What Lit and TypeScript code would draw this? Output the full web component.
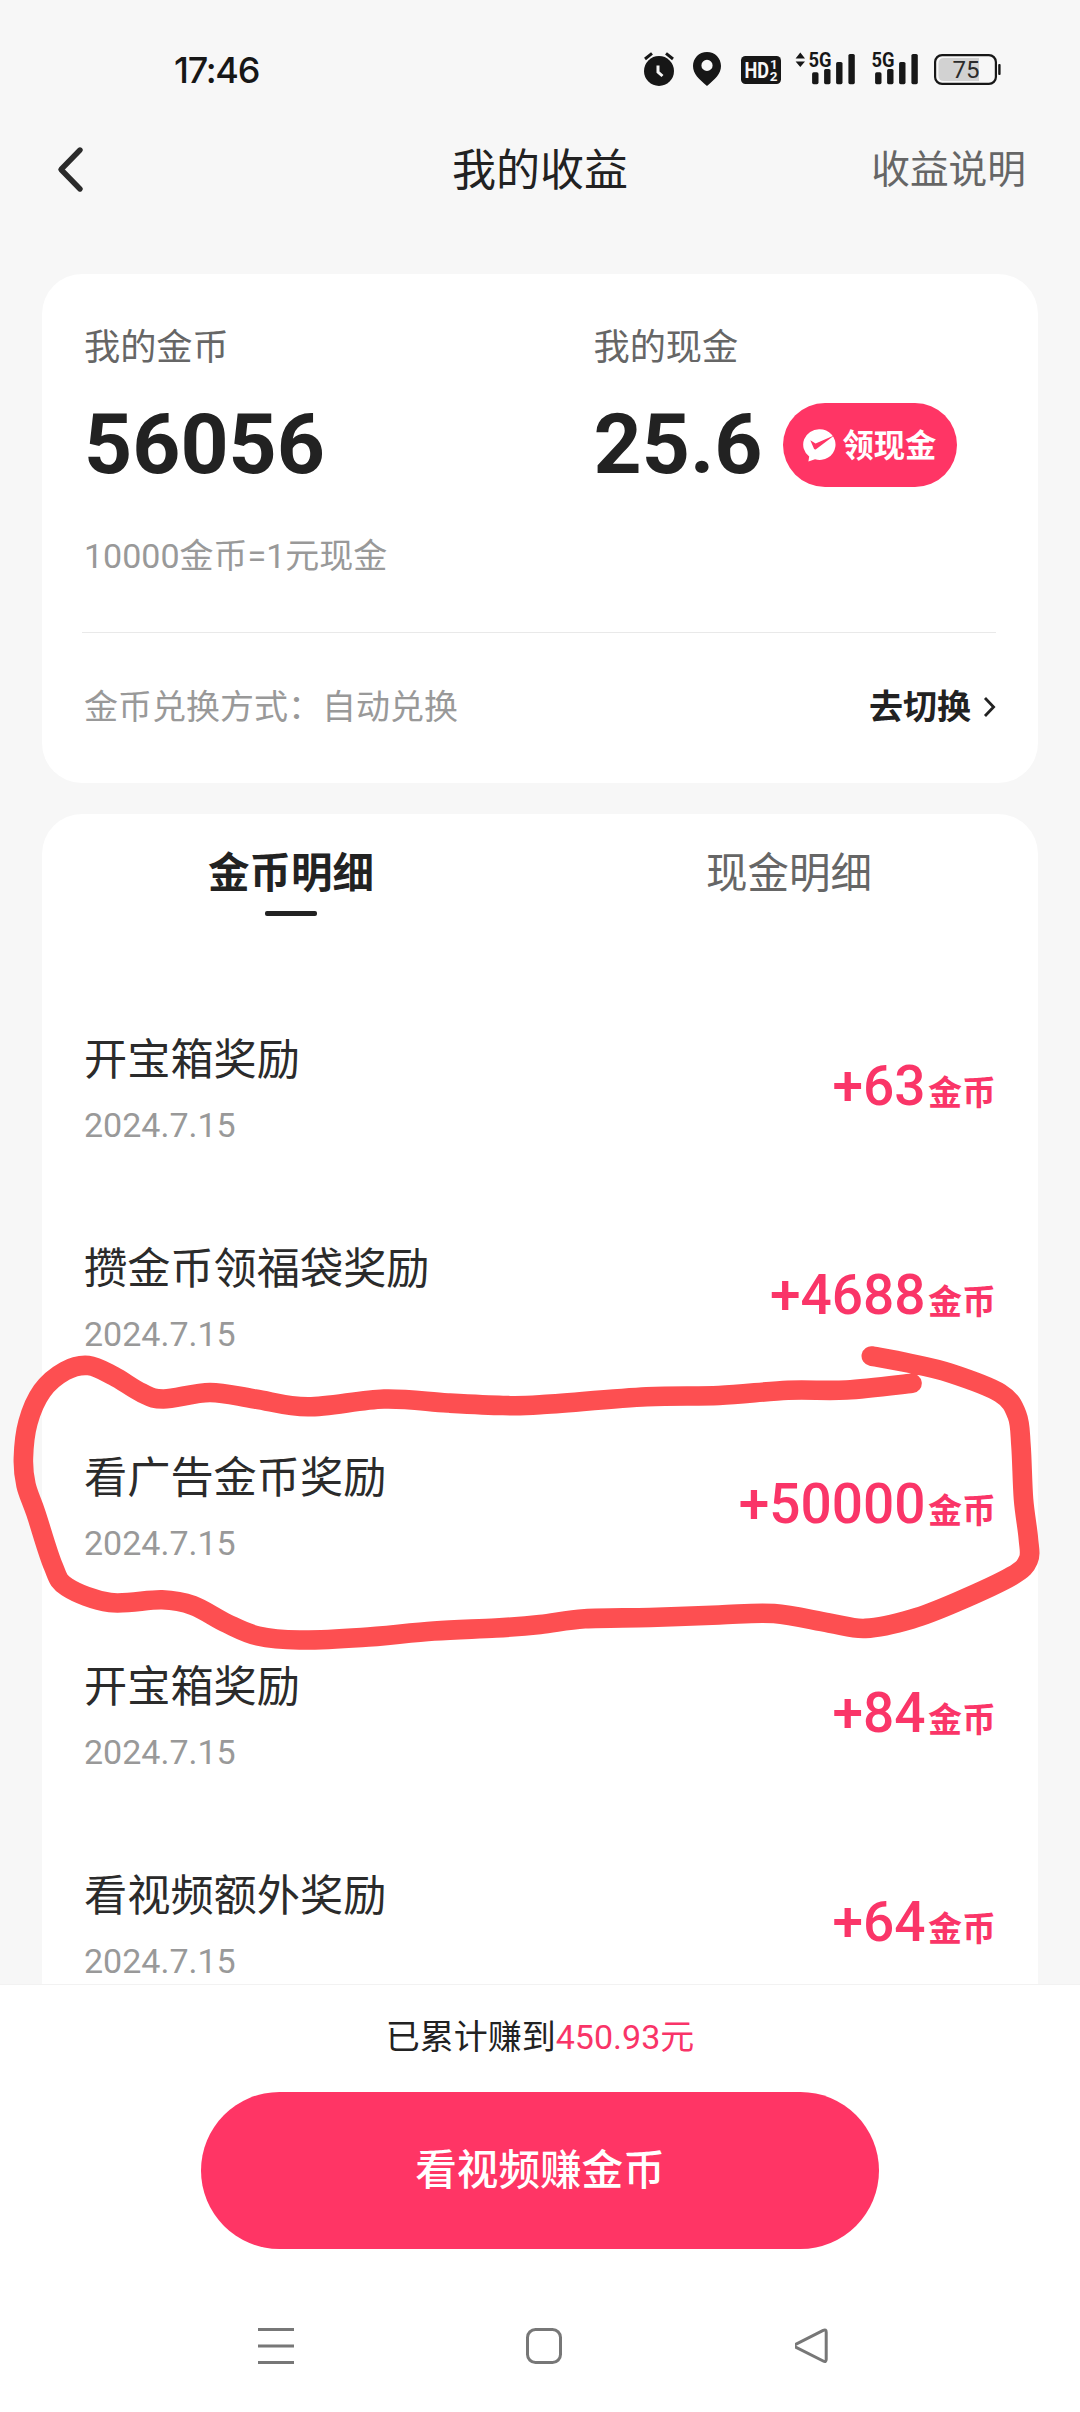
import { LitElement, html, css, svg } from "lit";
import { customElement } from "lit/decorators.js";

interface Entry {
  title: string;
  date: string;
  amount: string;
}

const ENTRIES: Entry[] = [
  { title: "开宝箱奖励", date: "2024.7.15", amount: "+63" },
  { title: "攒金币领福袋奖励", date: "2024.7.15", amount: "+4688" },
  { title: "看广告金币奖励", date: "2024.7.15", amount: "+50000" },
  { title: "开宝箱奖励", date: "2024.7.15", amount: "+84" },
  { title: "看视频额外奖励", date: "2024.7.15", amount: "+64" },
];

// Centre line of the freehand marker loop.
const MARKER: [number, number][] = [
  [871.3, 1356], [908.5, 1363], [949.8, 1373], [1000, 1393], [1017, 1415],
  [1021, 1446], [1023.5, 1499], [1028.3, 1538], [1028.3, 1560], [1011.8, 1576],
  [956.7, 1602], [912, 1619], [865.4, 1628.4], [829, 1623], [774, 1613.6],
  [719, 1615], [650, 1617.5], [584.8, 1618.8], [540, 1624.5], [496, 1628],
  [434, 1631], [361.6, 1637.5], [299.6, 1640], [258, 1636], [227, 1623.5],
  [193, 1605.5], [162, 1599.8], [110, 1602.5], [67, 1587], [53, 1565.5],
  [36, 1513.5], [26, 1485], [23.4, 1458], [28, 1422.4], [42, 1391],
  [65, 1371], [88.5, 1365.5], [113.6, 1376], [142, 1393], [163.6, 1399],
  [210, 1392.5], [255, 1399], [308, 1406.8], [384, 1399], [447.7, 1403],
  [503, 1405.5], [540, 1404.8], [646.7, 1396.8], [719, 1395.5], [788, 1390.3],
  [846.5, 1390], [912, 1383.3],
];

function smoothPath(p: [number, number][]): string {
  let d = `M${p[0][0]} ${p[0][1]}`;
  for (let i = 0; i < p.length - 1; i++) {
    const a = p[Math.max(i - 1, 0)];
    const b = p[i];
    const c = p[i + 1];
    const e = p[Math.min(i + 2, p.length - 1)];
    d += ` C${b[0] + (c[0] - a[0]) / 6} ${b[1] + (c[1] - a[1]) / 6} ${c[0] - (e[0] - b[0]) / 6} ${c[1] - (e[1] - b[1]) / 6} ${c[0]} ${c[1]}`;
  }
  return d;
}

@customElement("status-bar")
class StatusBar extends LitElement {
  static styles = css`
    :host {
      display: flex;
      justify-content: space-between;
      height: 112px;
      box-sizing: border-box;
      padding: 40px 70px 0 174px;
      color: #171717;
    }
    .time {
      padding-top: 9px;
      font: 450 36px/42px Inter, sans-serif;
      letter-spacing: -1.3px;
    }
    .icons {
      display: block;
      font-family: Roboto, sans-serif;
    }
  `;

  private signal(x: number) {
    return svg`
      <g transform="translate(${x} 0)">
        <text x="0" y="17" font-size="21" font-weight="700" textLength="23" lengthAdjust="spacingAndGlyphs">5G</text>
        <rect x="3.6" y="22.3" width="6.4" height="11.9" rx="1.6" />
        <rect x="15.6" y="19" width="6.4" height="15.2" rx="1.6" />
        <rect x="27.6" y="12" width="6.4" height="22.2" rx="1.6" />
        <rect x="39.9" y="4" width="6.4" height="30.2" rx="1.6" />
      </g>`;
  }

  render() {
    return html`
      <div class="time">17:46</div>
      <svg class="icons" width="370" height="50" viewBox="0 -10 370 50" fill="#171717">
        <circle cx="19" cy="21" r="15" />
        <path d="M5 9 L12 3.4 M33 9 L26 3.4" stroke="#171717" stroke-width="3" fill="none" />
        <path d="M18 15.5 V22 L22.5 26" stroke="#f7f7f7" stroke-width="3" fill="none" />
        <path fill-rule="evenodd" d="M67 2 C59 2 53 8.2 53 16 C53 24 59 29 67 36 C75 29 81 24 81 16 C81 8.2 75 2 67 2 Z M67 9.8 a5.6 5.6 0 1 1 0 11.2 a5.6 5.6 0 1 1 0 -11.2 Z" />
        <rect x="101" y="6" width="40" height="28" rx="4.5" />
        <g fill="#f7f7f7" font-weight="700">
          <text x="104.5" y="28.3" font-size="22" textLength="24.5" lengthAdjust="spacingAndGlyphs">HD</text>
          <text x="130" y="19.4" font-size="13.5">1</text>
          <text x="129.8" y="30.6" font-size="13.5">2</text>
        </g>
        <path d="M155.6 8.6 L160.3 2.6 L165 8.6 Z M155.6 11.4 L160.3 17 L165 11.4 Z" />
        ${this.signal(168.5)} ${this.signal(231.5)}
        <path d="M304 8 H339 V31 H304 Q298.5 31 298.5 25.5 V13.5 Q298.5 8 304 8 Z" fill="#d2d2d2" />
        <rect x="295.1" y="5.1" width="60.8" height="28.8" rx="7" fill="none" stroke="#171717" stroke-width="2.2" />
        <rect x="358.2" y="14" width="2.4" height="11" rx="1" />
        <text x="312.4" y="28.2" font-size="24" font-weight="400" fill="#2b2b2b">75</text>
      </svg>
    `;
  }
}

@customElement("app-root")
class AppRoot extends LitElement {
  static styles = css`
    :host {
      display: block;
      position: relative;
      width: 1080px;
      height: 2412px;
      overflow: hidden;
      background: #f7f7f7;
      color: #222;
      font-family: Roboto, "Noto Sans CJK SC", sans-serif;
    }
    .page {
      display: flex;
      flex-direction: column;
      height: 100%;
    }
    .header {
      display: grid;
      grid-template-columns: 1fr auto 1fr;
      align-items: center;
      height: 114px;
      padding: 0 54px;
      margin-bottom: 48px;
      flex: none;
    }
    .back {
      display: block;
    }
    .title {
      font-size: 44px;
      line-height: 60px;
      padding-top: 3px;
    }
    .explain {
      justify-self: end;
      color: #666;
      font-size: 38.7px;
      line-height: 50px;
      padding-top: 2px;
    }
    .card {
      background: #fff;
      margin: 0 42px;
      flex: none;
    }
    .balance {
      height: 509px;
      box-sizing: border-box;
      border-radius: 40px;
      padding: 54px 42px 0;
      margin-bottom: 31px;
      display: flex;
      flex-direction: column;
    }
    .totals {
      display: grid;
      grid-template-columns: 509.5px 1fr;
    }
    .label {
      color: #666;
      font-size: 36.2px;
      line-height: 40px;
    }
    .value {
      display: flex;
      align-items: center;
      height: 84px;
      margin-top: 35px;
      font-size: 84px;
      line-height: 84px;
      font-weight: 700;
    }
    .pill {
      display: flex;
      align-items: center;
      width: 174px;
      height: 84px;
      box-sizing: border-box;
      margin-left: 21px;
      padding-left: 20px;
      gap: 6px;
      border-radius: 42px;
      background: #ff3565;
      color: #fff;
      font-size: 31.3px;
      line-height: 40px;
      white-space: nowrap;
    }
    .pill-text {
      padding-top: 3px;
    }
    .muted {
      color: #999;
      font-size: 34px;
      line-height: 40px;
    }
    .rate {
      margin-top: 49px;
    }
    .divider {
      height: 1px;
      margin: 56px 0 0 -2px;
      background: #e9e9e9;
    }
    .exchange {
      flex: 1;
      display: flex;
      align-items: center;
      justify-content: space-between;
      padding-bottom: 2px;
    }
    .switch {
      display: flex;
      align-items: center;
      gap: 12px;
      font-size: 34px;
      line-height: 40px;
      font-weight: 700;
    }
    .records {
      flex: 1;
      min-height: 0;
      overflow: hidden;
      border-radius: 40px 40px 0 0;
    }
    .tabs {
      display: grid;
      grid-template-columns: 1fr 1fr;
      padding-top: 35px;
      margin-bottom: 69px;
    }
    .tab {
      display: flex;
      flex-direction: column;
      align-items: center;
      gap: 12px;
      font-size: 41.5px;
      line-height: 50px;
      color: #666;
    }
    .tab-active {
      color: #222;
      font-weight: 700;
    }
    .tab-active::after {
      content: "";
      width: 52px;
      height: 5px;
      border-radius: 2px;
      background: #222;
    }
    .row {
      display: flex;
      align-items: center;
      justify-content: space-between;
      height: 209px;
      padding: 0 42px;
    }
    .row-title {
      font-size: 43.2px;
      line-height: 50px;
      color: #2b2b2b;
      padding-top: 1px;
      margin-bottom: 19px;
    }
    .amount {
      display: flex;
      align-items: baseline;
      gap: 2.5px;
      padding-bottom: 1px;
      color: #fa3568;
      font-size: 55px;
      line-height: 60px;
      font-weight: 500;
    }
    .unit {
      font-size: 34px;
      font-weight: 600;
    }
    .footer {
      flex: none;
      height: 265px;
      box-sizing: border-box;
      display: flex;
      flex-direction: column;
      align-items: center;
      gap: 35px;
      padding-top: 32px;
      border-top: 1px solid #f2f2f2;
      background: #fff;
    }
    .earned {
      font-size: 34px;
      line-height: 40px;
    }
    .earned-sum {
      color: #f93468;
    }
    .cta {
      display: flex;
      align-items: center;
      justify-content: center;
      width: 678px;
      height: 157px;
      border-radius: 79px;
      background: #ff3565;
      color: #fff;
      font-size: 41.6px;
      line-height: 50px;
      font-weight: 500;
    }
    .nav {
      flex: none;
      display: flex;
      gap: 231px;
      height: 163px;
      box-sizing: border-box;
      padding: 78px 0 0 257px;
      background: #fff;
    }
    .marker {
      position: absolute;
      left: 0;
      top: 0;
      pointer-events: none;
    }
  `;

  render() {
    return html`
      <div class="page">
        <status-bar></status-bar>
        <div class="header">
          <svg class="back" width="34" height="50" viewBox="0 0 34 50" fill="none" stroke="#2b2b2b" stroke-width="5.4" stroke-linecap="round" stroke-linejoin="round">
            <path d="M26 6 L7 25.5 L26 45" />
          </svg>
          <div class="title">我的收益</div>
          <div class="explain">收益说明</div>
        </div>

        <div class="card balance">
          <div class="totals">
            <div>
              <div class="label">我的金币</div>
              <div class="value">56056</div>
            </div>
            <div>
              <div class="label">我的现金</div>
              <div class="value">
                <span>25.6</span>
                <span class="pill">
                  <svg width="33" height="33" viewBox="0 0 33 33">
                    <path d="M16.5 0.3 A15.8 15.3 0 1 1 12 30.2 L5.4 32.6 L6.2 27.6 A15.8 15.3 0 0 1 16.5 0.3 Z" fill="#fff" />
                    <path d="M7.3 11.3 L12.6 14.6 L31.5 6.2 L13 20.3 Q11.8 21 11 19.8 Z" fill="#ff3565" />
                  </svg>
                  <span class="pill-text">领现金</span>
                </span>
              </div>
            </div>
          </div>
          <div class="muted rate">10000金币=1元现金</div>
          <div class="divider"></div>
          <div class="exchange">
            <span class="muted">金币兑换方式：自动兑换</span>
            <span class="switch">
              去切换
              <svg width="13" height="22" viewBox="0 0 13 22" fill="none" stroke="#222" stroke-width="2.8">
                <path d="M2 2 L10.6 11 L2 20" />
              </svg>
            </span>
          </div>
        </div>

        <div class="card records">
          <div class="tabs">
            <div class="tab tab-active">金币明细</div>
            <div class="tab">现金明细</div>
          </div>
          ${ENTRIES.map(
            (e) => html`
              <div class="row">
                <div>
                  <div class="row-title">${e.title}</div>
                  <div class="muted">${e.date}</div>
                </div>
                <div class="amount"><span>${e.amount}</span><span class="unit">金币</span></div>
              </div>
            `
          )}
        </div>

        <div class="footer">
          <div class="earned">已累计赚到<span class="earned-sum">450.93元</span></div>
          <div class="cta">看视频赚金币</div>
        </div>
        <div class="nav">
          <svg width="38" height="38" viewBox="0 0 38 38" fill="none" stroke="#777" stroke-width="3">
            <path d="M1 2.5 H37 M1 19 H37 M1 35.5 H37" />
          </svg>
          <svg width="38" height="38" viewBox="0 0 38 38" fill="none" stroke="#777" stroke-width="3">
            <rect x="1.5" y="2.5" width="33" height="33" rx="8" />
          </svg>
          <svg width="38" height="38" viewBox="0 0 38 38" fill="none" stroke="#777" stroke-width="3" stroke-linejoin="round">
            <path d="M27.4 3.4 Q30.4 2 30.4 5.2 V32.2 Q30.4 35.6 27.4 34 L-0.2 20 Q-2 18.6 -0.2 17.4 Z" transform="translate(0.8 0)" />
          </svg>
        </div>
      </div>
      <svg class="marker" width="1080" height="2412" viewBox="0 0 1080 2412" fill="none" stroke="#fd4f51" stroke-width="19.6" stroke-linecap="round" stroke-linejoin="round">
        <path d=${smoothPath(MARKER)} />
      </svg>
    `;
  }
}
